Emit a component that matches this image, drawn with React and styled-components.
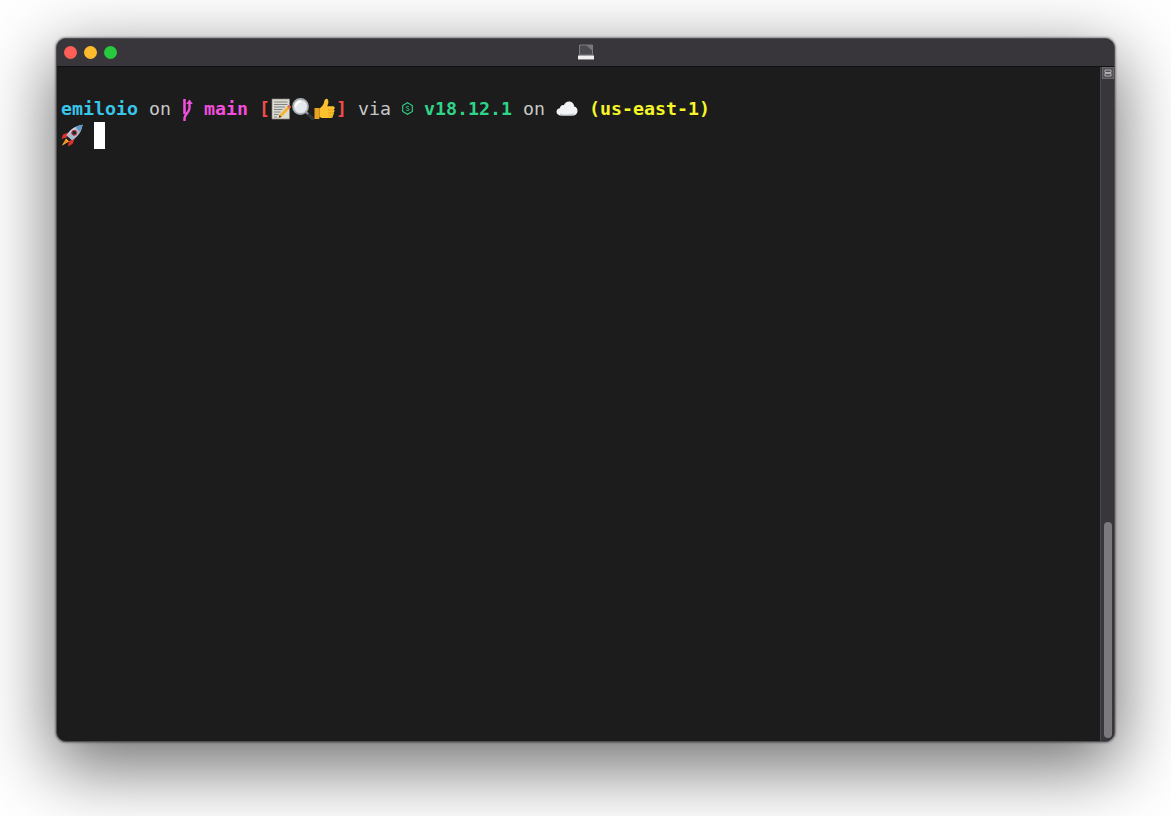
import React from 'react';
import styled, { createGlobalStyle } from 'styled-components';

const GlobalStyle = createGlobalStyle`
  html, body { margin: 0; padding: 0; background: #fff; }
  body { overflow: hidden; }
`;

const Page = styled.div`
  width: 1171px;
  height: 816px;
  padding: 38px 56px 74px;
  box-sizing: border-box;
`;

const Window = styled.div`
  display: flex;
  flex-direction: column;
  height: 100%;
  border-radius: 10px;
  overflow: hidden;
  background: #1c1c1c;
  box-shadow: 0 22px 70px 4px rgba(0, 0, 0, 0.56), 0 0 2px 1px rgba(0, 0, 0, 0.35);
  border: 1px solid #504e52;
  box-sizing: border-box;
`;

const TitleBar = styled.div`
  position: relative;
  flex: none;
  height: 27px;
  display: flex;
  align-items: center;
  justify-content: center;
  background: #38363b;
  border-bottom: 1px solid #111;
`;

const Lights = styled.div`
  position: absolute;
  left: 7px;
  top: 7px;
  display: flex;
  gap: 7px;
`;

const Light = styled.span`
  width: 13px;
  height: 13px;
  border-radius: 50%;
  background: ${p => p.$color};
`;

const Main = styled.div`
  flex: 1;
  display: flex;
  min-height: 0;
`;

const Terminal = styled.div`
  flex: 1;
  padding: 28px 0 0 4px;
  font-family: "DejaVu Sans Mono", "Liberation Mono", monospace;
  font-size: 18.27px;
  line-height: 27px;
  white-space: pre;
  color: #d4d4d4;
`;

const Line = styled.div`
  display: flex;
  align-items: center;
  height: 27px;
`;

const Txt = styled.span`
  color: ${p => p.$color || '#c8c8c8'};
  font-weight: ${p => (p.$bold ? 700 : 400)};
`;

const Glyph = styled.svg`
  flex: none;
  display: block;
  width: ${p => p.$w || 22}px;
  height: ${p => p.$h || 22}px;
`;

const Cursor = styled.span`
  width: 11px;
  height: 27px;
  margin-left: 11px;
  background: #fff;
`;

const ScrollRail = styled.div`
  flex: none;
  box-sizing: border-box;
  width: 14px;
  padding-left: 1px;
  display: flex;
  flex-direction: column;
  justify-content: space-between;
  align-items: center;
  background: #38363b;
  border-left: 1px solid #4a484d;
`;

const SplitIcon = styled.svg`
  display: block;
  width: 12px;
  height: 12px;
`;

const Thumb = styled.div`
  width: 8px;
  height: 216px;
  margin-bottom: 3px;
  border-radius: 4px;
  background: #7b797e;
`;

const LaptopIcon = () => (
  <Glyph $w={18} $h={17} viewBox="0 0 18 17">
    <path d="M2.500 1h13v10h-13z" fill="#4c4b4f" stroke="#8d8c90" strokeWidth=".8" />
    <path d="M9 1h6.500v6z" fill="#77767a" />
    <path d="M1 11.500h16V15H1z" fill="#f1f1f2" />
    <path d="M1 15h16v1H1z" fill="#8a898d" />
  </Glyph>
);

const BranchIcon = () => (
  <Glyph $w={11} $h={25} viewBox="0 0 11 25">
    <path d="M2.500 3v15" fill="none" stroke="#f24fdc" strokeWidth="2.600" />
    <path d="M2.500 25v-3c0-4 5-5 5-10V7" fill="none" stroke="#f24fdc" strokeWidth="2.400" />
    <path d="M7.500 3.500l3.300 4.500H4.200z" fill="#f24fdc" />
  </Glyph>
);

const MemoIcon = () => (
  <Glyph viewBox="0 0 22 22">
    <path d="M2 1h17.500v20H2z" fill="#dedcd2" stroke="#85837b" strokeWidth=".7" />
    <path d="M4 4h13.500M4 6.500h13.500M4 9h11M4 11.500h8.500M4 14h6.500M4 16.500h4.500M4 19h3" stroke="#77787a" strokeWidth=".9" />
    <path d="M18.800 7l2.200 2-9.500 10-2.800.8.800-2.900z" fill="#f2b530" />
    <path d="M18.800 7l2.200 2-1.600 1.700-2.200-2z" fill="#e85d5d" />
    <path d="M8.700 19.800l.8-2.900 2 2.100z" fill="#4a3a2a" />
  </Glyph>
);

const LensIcon = () => (
  <Glyph viewBox="0 0 22 22">
    <path d="M13.500 13.500l7 7" stroke="#2f3339" strokeWidth="3.200" strokeLinecap="round" />
    <path d="M13.500 13.500l2.500 2.500" stroke="#8d9298" strokeWidth="2" />
    <circle cx="8.500" cy="8.500" r="7.500" fill="#e4e9ed" stroke="#a9aeb4" strokeWidth="1.800" />
    <path d="M3.800 8a5 5 0 0 1 4.200-4.500" fill="none" stroke="#fff" strokeWidth="1.800" strokeLinecap="round" />
  </Glyph>
);

const ThumbIcon = () => (
  <Glyph viewBox="0 0 22 22">
    <path d="M.5 10h4.900v11H.5z" fill="#e9a21f" />
    <path d="M5.400 10.500c2.400-1.800 4-3.500 4.600-6 .3-1.500.8-3.800 2.400-3.800 2 0 2.300 2.800 1.800 4.800-.2.900-.6 1.800-.9 2.700h5.400c2.300 0 2.600 2.400 1.200 3.200 1 .8.900 2.300-.3 2.900.7 1 .4 2.200-.6 2.700.5 1.300-.4 3-1.900 3H9.500c-1.700 0-3-.5-4.100-1z" fill="#fbc02d" />
    <path d="M14 12h6M14.300 15h5.200M14.500 18h4" stroke="#d98f14" strokeWidth=".7" />
  </Glyph>
);

const NodeIcon = () => (
  <Glyph $w={11} $h={13} viewBox="0 0 11 13">
    <path d="M5.500.7l4.800 2.800v6L5.500 12.300.7 9.500v-6z" fill="none" stroke="#2fd489" strokeWidth="1.100" />
    <path d="M7 4.800c-.4-.6-2.800-.8-2.800.5 0 1.400 3 .9 3 2.400 0 1.200-2.700 1-3.300.3" fill="none" stroke="#2fd489" strokeWidth=".9" />
  </Glyph>
);

const CloudIcon = () => (
  <Glyph $h={15} viewBox="0 0 22 15">
    <path d="M5 14.500C2.200 14.500.5 12.800.5 10.800c0-2 1.500-3.400 3.400-3.600C4.300 5 6 3.800 7.800 4.200 8.800 1.900 10.600.5 13 .5c3 0 5 2.200 5.200 5 2.200.4 3.300 2.200 3.300 4.200 0 2.700-2 4.800-4.800 4.800z" fill="#f2f3f5" />
    <path d="M4 12.500c4 1.300 10 1.300 15-.5-1 1.700-2.200 2.500-3 2.500H5.500c-.8 0-1.200-1-1.500-2z" fill="#c6cad0" />
  </Glyph>
);

const RocketIcon = () => (
  <Glyph $h={23} viewBox="0 0 22 23">
    <path d="M7 8.500L2 10.500.5 15l5-1.500z" fill="#e0302b" />
    <path d="M13.500 15l-2 5-4.500 2.500 1-5.500z" fill="#e0302b" />
    <path d="M5 14.500L.8 21.800 8 17.500z" fill="#ffc42e" />
    <path d="M4.500 15.800L2.500 20l4-2.500z" fill="#f57a1f" />
    <path d="M5.500 11.500C8.500 6 13.500 2 21.500.8c-.8 7-4.800 11.800-10.300 15.400z" fill="#c9d6e4" />
    <path d="M5.500 11.500L15 4.500 21.500.8c-.8 7-4.800 11.800-10.300 15.400z" fill="#8fa3b8" opacity=".55" />
    <path d="M21.500.8c-2.800.3-4.800 1.200-6.800 2.600l4 4c1.500-2 2.500-4 2.800-6.600z" fill="#5f97c9" />
    <circle cx="13.200" cy="8.800" r="2.500" fill="#1f2a3c" stroke="#d9322e" strokeWidth="1" />
  </Glyph>
);

const App = () => (
  <>
    <GlobalStyle />
    <Page>
      <Window>
        <TitleBar>
          <Lights>
            <Light $color="#fe5f57" />
            <Light $color="#febb2e" />
            <Light $color="#28c83f" />
          </Lights>
          <LaptopIcon />
        </TitleBar>
        <Main>
          <Terminal>
            <Line>
              <Txt $color="#39c5ea" $bold>emiloio</Txt>
              <Txt> on </Txt>
              <BranchIcon />
              <Txt> </Txt>
              <Txt $color="#f24fdc" $bold>main</Txt>
              <Txt> </Txt>
              <Txt $color="#f14c4c" $bold>[</Txt>
              <MemoIcon />
              <LensIcon />
              <ThumbIcon />
              <Txt $color="#f14c4c" $bold>]</Txt>
              <Txt> via </Txt>
              <NodeIcon />
              <Txt> </Txt>
              <Txt $color="#2fd489" $bold>v18.12.1</Txt>
              <Txt> on </Txt>
              <CloudIcon />
              <Txt> </Txt>
              <Txt $color="#f5f52a" $bold>(us-east-1)</Txt>
            </Line>
            <Line>
              <RocketIcon />
              <Cursor />
            </Line>
          </Terminal>
          <ScrollRail>
            <SplitIcon viewBox="0 0 12 12">
              <rect x=".5" y=".5" width="11" height="11" fill="#535156" stroke="#69676c" />
              <path d="M3 3h6v2.500H3zM3 6.500h6V9H3z" fill="none" stroke="#b0afb2" />
            </SplitIcon>
            <Thumb />
          </ScrollRail>
        </Main>
      </Window>
    </Page>
  </>
);

export default App;
